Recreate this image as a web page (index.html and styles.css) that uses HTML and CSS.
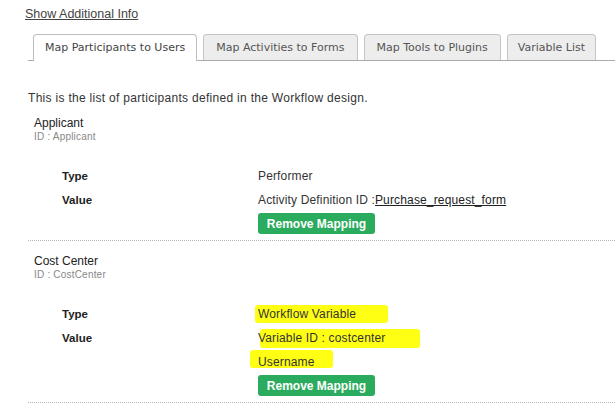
FILE: index.html
```html
<!DOCTYPE html>
<html>
<head>
<meta charset="utf-8">
<link rel="stylesheet" href="styles.css">
</head>
<body>
<div class="page">
  <a class="show-link" href="#">Show Additional Info</a>
  <div class="tabs">
    <div class="tab active">Map Participants to Users</div>
    <div class="tab">Map Activities to Forms</div>
    <div class="tab">Map Tools to Plugins</div>
    <div class="tab last">Variable List</div>
  </div>
  <p class="intro">This is the list of participants defined in the Workflow design.</p>

  <div class="participant">
    <div class="p-name">Applicant</div>
    <div class="p-id">ID : Applicant</div>
    <div class="grid">
      <div class="label">Type</div>
      <div class="val">Performer</div>
      <div class="label">Value</div>
      <div class="val">Activity Definition ID :<a class="ulink" href="#">Purchase_request_form</a></div>
      <div class="label"></div>
      <div class="val btn-cell"><button class="btn">Remove Mapping</button></div>
    </div>
  </div>

  <div class="participant">
    <div class="p-name">Cost Center</div>
    <div class="p-id">ID : CostCenter</div>
    <div class="grid">
      <div class="label">Type</div>
      <div class="val"><span class="hl hl1"></span><span class="txt">Workflow Variable</span></div>
      <div class="label">Value</div>
      <div class="val"><span class="hl hl2"></span><span class="txt">Variable ID : costcenter</span></div>
      <div class="label"></div>
      <div class="val"><span class="hl hl3"></span><span class="txt">Username</span></div>
      <div class="label"></div>
      <div class="val btn-cell"><button class="btn">Remove Mapping</button></div>
    </div>
  </div>
</div>
</body>
</html>
```

FILE: styles.css
```css
html, body {
  margin: 0;
  padding: 0;
  background: #ffffff;
}
.page {
  padding-left: 28px;
  font-family: "Liberation Sans", Arial, sans-serif;
  color: #333;
}
.show-link {
  display: block;
  margin-left: -3px;
  padding-top: 7px;
  height: 14px;
  line-height: 14px;
  font-size: 12.5px;
  color: #444;
  text-decoration: underline;
}
.tabs {
  display: flex;
  gap: 6px;
  margin-top: 13px;
  padding-left: 5px;
  border-bottom: 1px solid #aaaaaa;
  height: 26px;
}
.tab {
  height: 25px;
  line-height: 25px;
  padding: 0 12px;
  font-family: "DejaVu Sans", Verdana, sans-serif;
  font-size: 11px;
  color: #555;
  background: #ededed;
  border: 1px solid #c4c4c4;
  border-bottom: none;
  border-radius: 4px 4px 0 0;
}
.tab.active {
  background: #ffffff;
  color: #444;
  height: 26px;
  padding: 0 11px;
  border-color: #bdbdbd;
}
.tab.last {
  padding: 0 10px;
}
.intro {
  margin: 31px 0 -1px 0;
  font-size: 12px;
  line-height: 12px;
  letter-spacing: 0.3px;
}
.participant {
  padding: 13px 0 6px 0;
  border-bottom: 1px dotted #b8b8b8;
}
.p-name {
  padding-left: 6px;
  font-size: 12px;
  line-height: 14px;
  color: #222;
}
.p-id {
  margin-top: 1px;
  padding-left: 6px;
  font-size: 10px;
  letter-spacing: 0.2px;
  line-height: 12px;
  color: #888;
}
.grid {
  display: grid;
  grid-template-columns: 196px 1fr;
  margin-top: 21px;
  margin-left: 34px;
  font-size: 12px;
  letter-spacing: 0.15px;
}
.label {
  font-weight: bold;
  color: #222;
  line-height: 24px;
  font-size: 11.5px;
  letter-spacing: 0;
}
.val {
  position: relative;
  line-height: 24px;
  color: #333;
}
.txt {
  position: relative;
}
.ulink {
  color: #222;
  text-decoration: underline;
}
.btn-cell {
  line-height: 0;
  padding-top: 1px;
}
.btn {
  width: 117px;
  height: 21px;
  padding: 0;
  border: none;
  border-radius: 3px;
  background: #2bab5d;
  color: #ffffff;
  font-family: "Liberation Sans", Arial, sans-serif;
  font-weight: bold;
  font-size: 12px;
  letter-spacing: 0;
}
.hl {
  position: absolute;
  background: #ffff14;
  border-radius: 3px;
}
.hl1 { left: -3px; top: 3px; width: 133px; height: 18px; }
.hl2 { left: 2px; top: 3px; width: 160px; height: 19px; }
.hl3 { left: -8px; top: 0; width: 83px; height: 18px; }
```
